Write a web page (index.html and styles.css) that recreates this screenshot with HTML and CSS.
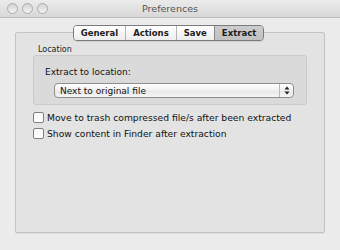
FILE: index.html
```html
<!DOCTYPE html>
<html lang="en">
<head>
    <meta charset="UTF-8">
    <meta name="viewport" content="width=device-width, initial-scale=1.0">
    <title>Preferences</title>
    <link rel="stylesheet" href="styles.css">
</head>
<body>
    <div class="window">
        <!-- Title bar with inactive traffic lights -->
        <div class="titlebar">
            <div class="lights">
                <span class="light"></span>
                <span class="light"></span>
                <span class="light"></span>
            </div>
            <div class="title">Preferences</div>
        </div>

        <div class="content">
            <div class="tabs">
                <span class="tab">General</span>
                <span class="tab">Actions</span>
                <span class="tab">Save</span>
                <span class="tab selected">Extract</span>
            </div>

            <div class="tabbox">
                <div class="group-label">Location</div>
                <div class="group">
                    <div class="field-label">Extract to location:</div>
                    <div class="popup">
                        <span class="popup-text">Next to original file</span>
                        <span class="popup-arrows">
                            <svg width="6" height="9" viewBox="0 0 6 9">
                                <path d="M3 0.5 L5.5 3.5 L0.5 3.5 Z" fill="#222"/>
                                <path d="M3 8.5 L5.5 5.5 L0.5 5.5 Z" fill="#222"/>
                            </svg>
                        </span>
                    </div>
                </div>

                <label class="check">
                    <span class="box"></span>
                    Move to trash compressed file/s after been extracted
                </label>
                <label class="check">
                    <span class="box"></span>
                    Show content in Finder after extraction
                </label>
            </div>
        </div>
    </div>
</body>
</html>
```

FILE: styles.css
```css
body {
    margin: 0;
    font-family: "DejaVu Sans", "Noto Sans", sans-serif;
    color: #111;
    background-color: #ececec;
}

.window {
    width: 340px;
    height: 250px;
    background-color: #ececec;
    overflow: hidden;
}

/* Title bar */
.titlebar {
    height: 17px;
    display: flex;
    align-items: center;
    position: relative;
    background: linear-gradient(#ebebeb, #d8d8d8);
    border-bottom: 1px solid #bcbcbc;
}

.lights {
    display: flex;
    gap: 4px;
    padding-left: 7px;
    z-index: 1;
}

.light {
    width: 11px;
    height: 11px;
    border-radius: 50%;
    border: 1px solid #ababab;
    background: linear-gradient(#d4d4d4, #f3f3f3);
    box-sizing: border-box;
}

.title {
    position: absolute;
    left: 0;
    right: 0;
    text-align: center;
    font-size: 9.5px;
    color: #555;
}

/* Content area */
.content {
    display: flex;
    flex-direction: column;
    padding: 7px 15px 0;
}

.tabs {
    display: flex;
    align-self: center;
    height: 16px;
    margin-left: -3px;
    border: 1px solid #7a7a7a;
    border-radius: 4px;
    overflow: hidden;
    box-sizing: border-box;
    position: relative;
    z-index: 1;
    box-shadow: 0 1px 0 rgba(0, 0, 0, 0.08);
}

.tab {
    display: flex;
    align-items: center;
    padding: 0 7px;
    font-size: 8.5px;
    font-weight: bold;
    color: #1c1c1c;
    background: linear-gradient(#ffffff, #ededed);
    border-left: 1px solid #b4b4b4;
}

.tab:first-child {
    border-left: none;
}

.tab.selected {
    background: linear-gradient(#cdcdcd, #c0c0c0);
    border-left-color: #8a8a8a;
}

.tabbox {
    height: 201px;
    box-sizing: border-box;
    margin-top: -9px;
    padding: 11px 17px 0 17px;
    background-color: #e3e3e3;
    border: 1px solid #c4c4c4;
    border-radius: 2px;
    box-shadow: 0 1px 1px rgba(0, 0, 0, 0.07);
}

.group-label {
    font-size: 8px;
    color: #222;
    padding-left: 5px;
    height: 11px;
    line-height: 11px;
}

.group {
    height: 50px;
    box-sizing: border-box;
    padding: 10px 12px 0 11px;
    background-color: #dadada;
    border: 1px solid #cacaca;
    border-radius: 3px;
}

.field-label {
    font-size: 9px;
    line-height: 12px;
}

.popup {
    display: flex;
    align-items: center;
    height: 15px;
    margin: 5px 0 0 9px;
    box-sizing: border-box;
    background: linear-gradient(#ffffff, #f0f0f0 50%, #e6e6e6 51%, #f6f6f6);
    border: 1px solid #8d8d8d;
    border-radius: 4px;
    font-size: 9px;
}

.popup-text {
    flex: 1;
    padding-left: 5px;
}

.popup-arrows {
    width: 13px;
    height: 100%;
    display: flex;
    align-items: center;
    justify-content: center;
    border-left: 1px solid #b8b8b8;
}

/* Checkboxes */
.check {
    display: flex;
    align-items: center;
    gap: 3px;
    font-size: 9.2px;
    height: 16px;
    white-space: nowrap;
}

.group + .check {
    margin-top: 4px;
}

.box {
    width: 11px;
    height: 11px;
    flex-shrink: 0;
    box-sizing: border-box;
    border: 1px solid #7f7f7f;
    border-radius: 2px;
    background: linear-gradient(#f6f6f6, #ffffff);
}
```
